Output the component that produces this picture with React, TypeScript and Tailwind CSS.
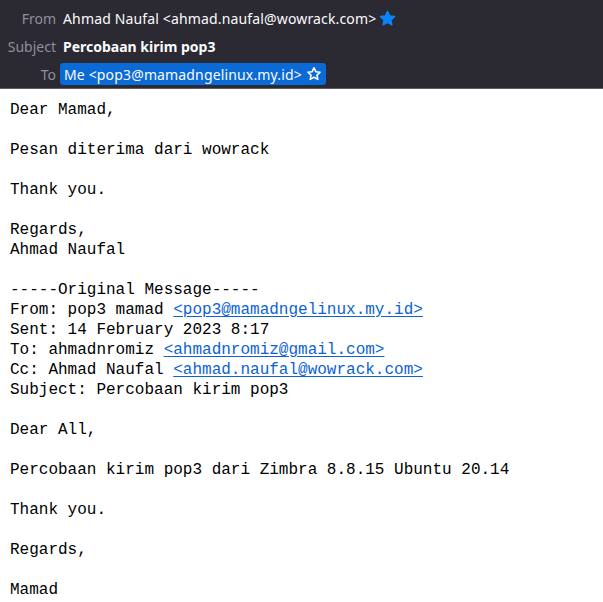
import React from "react";

const StarFilled = () => (
  <svg viewBox="0 0 16 16" className="w-[17px] h-[17px]" aria-hidden>
    <path
      d="M8 1.2l2.05 4.3 4.7.6-3.45 3.25.88 4.65L8 11.7l-4.18 2.3.88-4.65L1.25 6.1l4.7-.6z"
      fill="#0a84ff"
      stroke="#0a84ff"
      strokeWidth="1.2"
      strokeLinejoin="round"
    />
  </svg>
);

const StarOutline = () => (
  <svg viewBox="0 0 16 16" className="w-[16px] h-[16px]" aria-hidden>
    <path
      d="M8 1.8l1.85 3.9 4.25.55-3.12 2.95.8 4.2L8 11.3l-3.78 2.1.8-4.2L1.9 6.25l4.25-.55z"
      fill="none"
      stroke="#ffffff"
      strokeWidth="1.6"
      strokeLinejoin="round"
    />
  </svg>
);

const headerRows = [
  { label: "From", value: "from" },
  { label: "Subject", value: "subject" },
  { label: "To", value: "to" },
];

const Link = ({ children }: { children: React.ReactNode }) => (
  <span className="text-[#0b62d6] underline underline-offset-2">{children}</span>
);

export default function App() {
  return (
    <div className="w-[603px] h-[602px] overflow-hidden bg-white">
      {/* message header */}
      <div
        className="h-[89px] bg-[#2b2a33] border-b border-[#5b5b66] pt-[5px] flex flex-col"
        style={{ fontFamily: '"Noto Sans", sans-serif' }}
      >
        {headerRows.map((row) => (
          <div key={row.label} className="h-[28px] flex items-center text-[14px]">
            <div className="w-[56px] text-right text-[#8f8f9d]">{row.label}</div>
            <div className="pl-[7px] flex items-center text-[#fbfbfe]">
              {row.value === "from" && (
                <>
                  <span className="tracking-[0.15px]">
                    Ahmad Naufal &lt;ahmad.naufal@wowrack.com&gt;
                  </span>
                  <span className="ml-[3px]">
                    <StarFilled />
                  </span>
                </>
              )}
              {row.value === "subject" && (
                <span className="font-bold">Percobaan kirim pop3</span>
              )}
              {row.value === "to" && (
                <span className="-ml-[3px] bg-[#0a6ad6] rounded-[3px] px-[4px] h-[22px] flex items-center gap-[4px]">
                  <span className="tracking-[0.15px]">Me &lt;pop3@mamadngelinux.my.id&gt;</span>
                  <StarOutline />
                </span>
              )}
            </div>
          </div>
        ))}
      </div>

      {/* message body */}
      <pre
        className="px-[10px] pt-[11px] text-[16px] leading-[20px] text-black whitespace-pre"
        style={{ fontFamily: '"Liberation Mono", monospace' }}
      >
        {"Dear Mamad,\n\nPesan diterima dari wowrack\n\nThank you.\n\nRegards,\nAhmad Naufal\n\n-----Original Message-----\nFrom: pop3 mamad "}
        <Link>&lt;pop3@mamadngelinux.my.id&gt;</Link>
        {"\nSent: 14 February 2023 8:17\nTo: ahmadnromiz "}
        <Link>&lt;ahmadnromiz@gmail.com&gt;</Link>
        {"\nCc: Ahmad Naufal "}
        <Link>&lt;ahmad.naufal@wowrack.com&gt;</Link>
        {"\nSubject: Percobaan kirim pop3\n\nDear All,\n\nPercobaan kirim pop3 dari Zimbra 8.8.15 Ubuntu 20.14\n\nThank you.\n\nRegards,\n\nMamad"}
      </pre>
    </div>
  );
}
